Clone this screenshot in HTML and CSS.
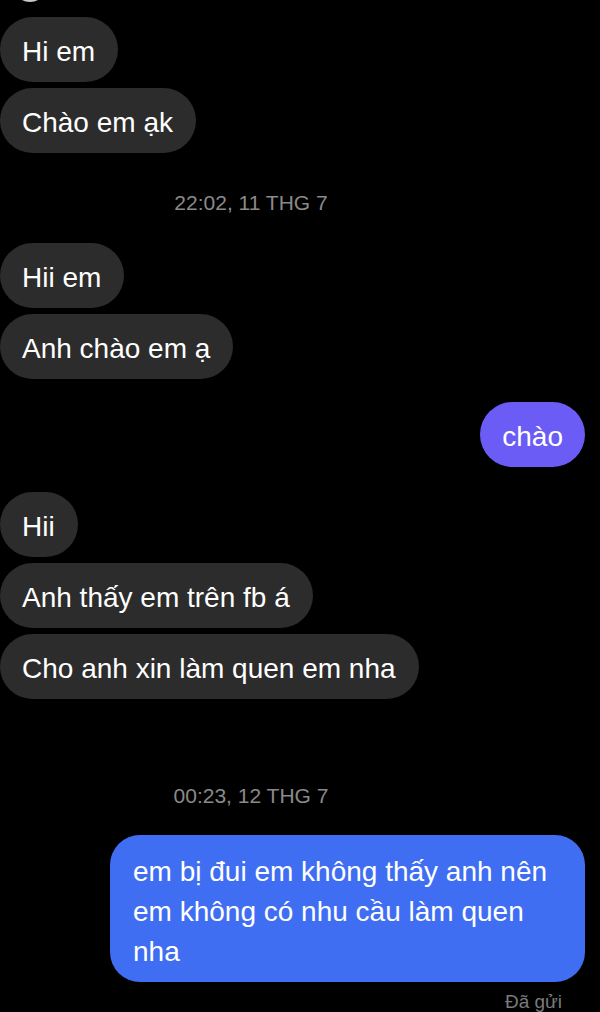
FILE: index.html
```html
<!DOCTYPE html>
<html lang="vi">
<head>
<meta charset="utf-8">
<title>Chat</title>
<link rel="stylesheet" href="styles.css">
</head>
<body>
<main class="chat">
  <div class="avatar"></div>
  <div class="group in first">
    <div class="bubble">Hi em</div>
    <div class="bubble">Chào em ạk</div>
  </div>
  <div class="stamp stamp-1">22:02, 11 THG 7</div>
  <div class="group in">
    <div class="bubble">Hii em</div>
    <div class="bubble">Anh chào em ạ</div>
  </div>
  <div class="group out purple-group">
    <div class="bubble purple">chào</div>
  </div>
  <div class="group in third">
    <div class="bubble">Hii</div>
    <div class="bubble">Anh thấy em trên fb á</div>
    <div class="bubble">Cho anh xin làm quen em nha</div>
  </div>
  <div class="stamp stamp-2">00:23, 12 THG 7</div>
  <div class="group out">
    <div class="bubble blue">em bị đui em không thấy anh nên em không có nhu cầu làm quen nha</div>
  </div>
  <div class="status">Đã gửi</div>
</main>
</body>
</html>
```
FILE: styles.css
```css
html, body {
  margin: 0;
  padding: 0;
  background: #000;
}
body {
  width: 600px;
  height: 1012px;
  overflow: hidden;
  font-family: "Liberation Sans", Arial, sans-serif;
  color: #fff;
}
.chat {
  display: flex;
  flex-direction: column;
}
.avatar {
  width: 30px;
  height: 30px;
  margin: -32px 0 0 13px;
  border-radius: 50%;
  border: 2px solid #c9c9c9;
  background: #1a1a1a;
}
.group {
  display: flex;
  flex-direction: column;
  gap: 6px;
}
.group.in { align-items: flex-start; }
.group.out { align-items: flex-end; padding-right: 15px; }
.group.first { margin-top: 15px; }
.bubble {
  font-size: 28px;
  line-height: 33px;
  padding: 18px 23px 14px 22px;
  background: #2c2c2c;
  border-radius: 33px;
  white-space: nowrap;
}
.stamp {
  text-align: center;
  font-size: 21px;
  line-height: 24px;
  color: #8a8a8a;
  padding-right: 98px;
}
.stamp-1 { margin: 38px 0 28px; }
.stamp-2 { margin: 85px 0 27px; }
.purple-group { margin-top: 23px; }
.bubble.purple {
  background: #6b5cf5;
  padding-right: 22px;
}
.third { margin-top: 25px; }
.bubble.blue {
  background: #3f6ef2;
  white-space: normal;
  width: 475px;
  box-sizing: border-box;
  line-height: 40px;
  padding: 17px 24px 10px 23px;
  border-radius: 30px;
}
.status {
  align-self: flex-end;
  margin: 9px 38px 0 0;
  font-size: 19px;
  line-height: 22px;
  color: #7a7a7a;
}
```
